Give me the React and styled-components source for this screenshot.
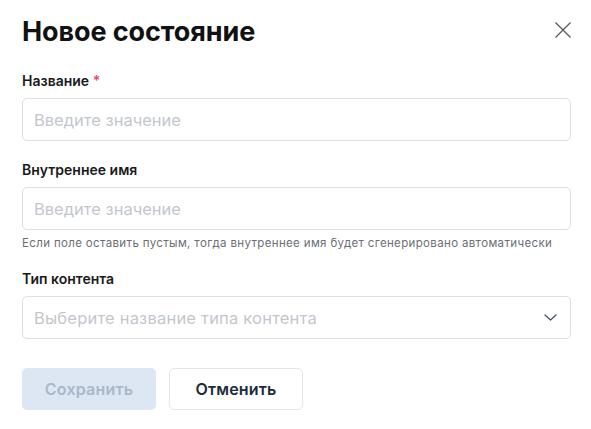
import React from 'react';
import styled, { createGlobalStyle } from 'styled-components';

const GlobalStyle = createGlobalStyle`
  html, body {
    margin: 0;
    padding: 0;
    background: #ffffff;
    font-family: Inter, "Noto Sans", sans-serif;
    color: #111111;
  }
`;

const Modal = styled.div`
  width: 591px;
  box-sizing: border-box;
  padding: 15px 19px 0 22px;
`;

const Header = styled.div`
  display: flex;
  justify-content: space-between;
  align-items: center;
  margin-bottom: 24px;
`;

const Title = styled.h2`
  margin: 0;
  font-size: 27px;
  font-weight: 700;
  line-height: 33px;
  letter-spacing: -0.1px;
  color: #111111;
`;

const CloseButton = styled.button`
  border: none;
  background: none;
  padding: 0;
  width: 18px;
  height: 18px;
  cursor: pointer;
  display: flex;
  margin-top: -3px;
`;

const Field = styled.div`
  display: flex;
  flex-direction: column;
  margin-bottom: ${(p) => (p.$gap === undefined ? 20 : p.$gap)}px;
`;

const Label = styled.label`
  font-size: 14px;
  font-weight: 600;
  line-height: 17px;
  color: #1a1a1a;
  margin-bottom: 9px;

  span {
    color: #e5486b;
  }
`;

const Input = styled.input`
  box-sizing: border-box;
  width: 549px;
  height: 43px;
  padding: 0 11px;
  border: 1px solid #dcdfe3;
  border-radius: 5px;
  font-family: Inter, "Noto Sans", sans-serif;
  font-size: 16.5px;
  color: #111;
  outline: none;

  &::placeholder {
    color: #c3c7cd;
  }
`;

const Hint = styled.div`
  margin-top: 6px;
  font-size: 11.5px;
  line-height: 14px;
  letter-spacing: 0.35px;
  color: #6b6f75;
  white-space: nowrap;
`;

const SelectBox = styled.div`
  box-sizing: border-box;
  width: 549px;
  height: 43px;
  padding: 0 13px 0 11px;
  border: 1px solid #dcdfe3;
  border-radius: 5px;
  display: flex;
  align-items: center;
  justify-content: space-between;
  font-size: 16.5px;
  letter-spacing: 0.2px;
  color: #c3c7cd;
  cursor: pointer;
`;

const Actions = styled.div`
  display: flex;
  gap: 13px;
  margin-top: 29px;
`;

const Button = styled.button`
  box-sizing: border-box;
  width: 134px;
  height: 42px;
  border-radius: 5px;
  font-family: Inter, "Noto Sans", sans-serif;
  font-size: 16px;
  font-weight: 600;
  letter-spacing: 0.2px;
  cursor: pointer;
  border: ${(p) => (p.$primary ? 'none' : '1px solid #e3e6ea')};
  background: ${(p) => (p.$primary ? '#dde7f3' : '#ffffff')};
  color: ${(p) => (p.$primary ? '#a9b8ca' : '#1c2b3c')};

  &:disabled {
    cursor: default;
  }
`;

const App = () => {
  return (
    <Modal>
      <GlobalStyle />
      <Header>
        <Title>Новое состояние</Title>
        <CloseButton aria-label="Закрыть">
          <svg width="18" height="18" viewBox="0 0 18 18" fill="none">
            <path d="M1.5 1.5L16.5 16.5M16.5 1.5L1.5 16.5" stroke="#555" strokeWidth="1.2" />
          </svg>
        </CloseButton>
      </Header>

      <Field>
        <Label>
          Название <span>*</span>
        </Label>
        <Input placeholder="Введите значение" />
      </Field>

      <Field>
        <Label>Внутреннее имя</Label>
        <Input placeholder="Введите значение" />
        <Hint>Если поле оставить пустым, тогда внутреннее имя будет сгенерировано автоматически</Hint>
      </Field>

      <Field $gap={0}>
        <Label>Тип контента</Label>
        <SelectBox>
          Выберите название типа контента
          <svg width="13" height="7" viewBox="0 0 13 7" fill="none">
            <path d="M1 1L6.5 6L12 1" stroke="#3f5470" strokeWidth="1.3" strokeLinecap="round" strokeLinejoin="round" />
          </svg>
        </SelectBox>
      </Field>

      <Actions>
        <Button $primary disabled>
          Сохранить
        </Button>
        <Button>Отменить</Button>
      </Actions>
    </Modal>
  );
};

export default App;
